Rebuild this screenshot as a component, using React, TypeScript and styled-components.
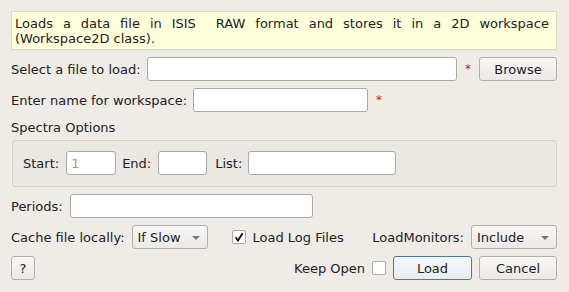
import React from 'react'
import styled, { createGlobalStyle } from 'styled-components'

const GlobalStyle = createGlobalStyle`
  html, body {
    margin: 0;
    padding: 0;
    background: #efebe7;
  }
  body {
    font-family: 'DejaVu Sans', 'Liberation Sans', sans-serif;
    font-size: 13px;
    color: #222;
  }
`

const Dialog = styled.div`
  width: 569px;
  height: 292px;
  box-sizing: border-box;
  padding: 11px 12px 0 11px;
  display: flex;
  flex-direction: column;
  gap: 7px;
`

const Description = styled.div`
  height: 39px;
  box-sizing: border-box;
  background: #ffffdc;
  border: 1px solid #d9d7c6;
  padding: 4px 7px 3px 3px;
  line-height: 15px;
  text-align: justify;
`

const Row = styled.div`
  display: flex;
  align-items: center;
  height: 24px;
  gap: 7px;
`

const Label = styled.span<{ $left?: number; $right?: number }>`
  white-space: nowrap;
  margin-left: ${p => (p.$left ? `${p.$left}px` : '0')};
  margin-right: ${p => (p.$right ? `${p.$right}px` : '0')};
`

const Input = styled.input<{ $width?: number }>`
  box-sizing: border-box;
  height: 24px;
  ${p => (p.$width ? `width: ${p.$width}px;` : 'flex: 1; min-width: 0;')}
  border: 1px solid #aca8a4;
  border-radius: 3px;
  background: #fff;
  padding: 0 4px;
  font: inherit;
  color: #222;
  outline: none;
  &::placeholder {
    color: #9a9a9a;
  }
`

const Required = styled.span`
  color: #b5272a;
  font-size: 12px;
  width: 8px;
  text-align: center;
`

const Button = styled.button<{ $width: number; $focused?: boolean }>`
  box-sizing: border-box;
  width: ${p => p.$width}px;
  height: 24px;
  flex: none;
  border: 1px solid ${p => (p.$focused ? '#3f7cb0' : '#b2aeaa')};
  border-radius: 3px;
  background: ${p =>
    p.$focused
      ? 'linear-gradient(#f6f8fa, #e9edf1)'
      : 'linear-gradient(#f8f7f6, #ebe9e7)'};
  font: inherit;
  color: #222;
  padding: 0;
`

const Section = styled.div`
  display: flex;
  flex-direction: column;
  gap: 3px;
`

const SectionTitle = styled.div`
  height: 18px;
  line-height: 18px;
`

const GroupBox = styled.div`
  height: 47px;
  box-sizing: border-box;
  border: 1px solid #d6d2cd;
  border-radius: 3px;
  background: #ebe8e4;
  padding: 10px 10px 11px;
  margin-left: 1px;
  display: flex;
  align-items: center;
  gap: 6px;
`

const Combo = styled.div<{ $width: number }>`
  box-sizing: border-box;
  width: ${p => p.$width}px;
  height: 24px;
  flex: none;
  border: 1px solid #b2aeaa;
  border-radius: 3px;
  background: linear-gradient(#f8f7f6, #ebe9e7);
  display: flex;
  align-items: center;
  justify-content: space-between;
  padding: 0 7px 0 5px;
`

const Arrow = styled.span`
  width: 0;
  height: 0;
  border-left: 4px solid transparent;
  border-right: 4px solid transparent;
  border-top: 4px solid #777;
  margin-top: 1px;
`

const CheckBox = styled.span<{ $left?: number }>`
  box-sizing: border-box;
  width: 14px;
  height: 14px;
  flex: none;
  border: 1px solid #aca8a4;
  border-radius: 2px;
  background: #fff;
  margin-left: ${p => (p.$left ? `${p.$left}px` : '0')};
  display: flex;
  align-items: center;
  justify-content: center;
`

const Spacer = styled.div`
  flex: 1;
`

const Tick = () => (
  <svg width="10" height="10" viewBox="0 0 10 10">
    <path d="M1.5 5.2 L4 8.5 L8.6 1.2" fill="none" stroke="#111" strokeWidth="1.9" />
  </svg>
)

const App = () => (
  <>
    <GlobalStyle />
    <Dialog>
      <Description>
        Loads a data file in ISIS{'\u00a0'} RAW format and stores it in a 2D
        workspace (Workspace2D class).
      </Description>

      <Row>
        <Label $right={-1}>Select a file to load:</Label>
        <Input />
        <Required>*</Required>
        <Button $width={78}>Browse</Button>
      </Row>

      <Row>
        <Label $right={-1}>Enter name for workspace:</Label>
        <Input $width={175} />
        <Required>*</Required>
      </Row>

      <Section>
        <SectionTitle>Spectra Options</SectionTitle>
        <GroupBox>
          <Label $right={1}>Start:</Label>
          <Input $width={50} placeholder="1" />
          <Label $right={1}>End:</Label>
          <Input $width={49} />
          <Label $left={2}>List:</Label>
          <Input $width={148} />
        </GroupBox>
      </Section>

      <Row>
        <Label>Periods:</Label>
        <Input $width={243} />
      </Row>

      <Row>
        <Label>Cache file locally:</Label>
        <Combo $width={76}>
          If Slow
          <Arrow />
        </Combo>
        <CheckBox $left={17}>
          <Tick />
        </CheckBox>
        <Label>Load Log Files</Label>
        <Spacer />
        <Label>LoadMonitors:</Label>
        <Combo $width={86}>
          Include
          <Arrow />
        </Combo>
      </Row>

      <Row>
        <Button $width={24}>?</Button>
        <Spacer />
        <Label>Keep Open</Label>
        <CheckBox />
        <Button $width={79} $focused>
          Load
        </Button>
        <Button $width={78}>Cancel</Button>
      </Row>
    </Dialog>
  </>
)

export default App
